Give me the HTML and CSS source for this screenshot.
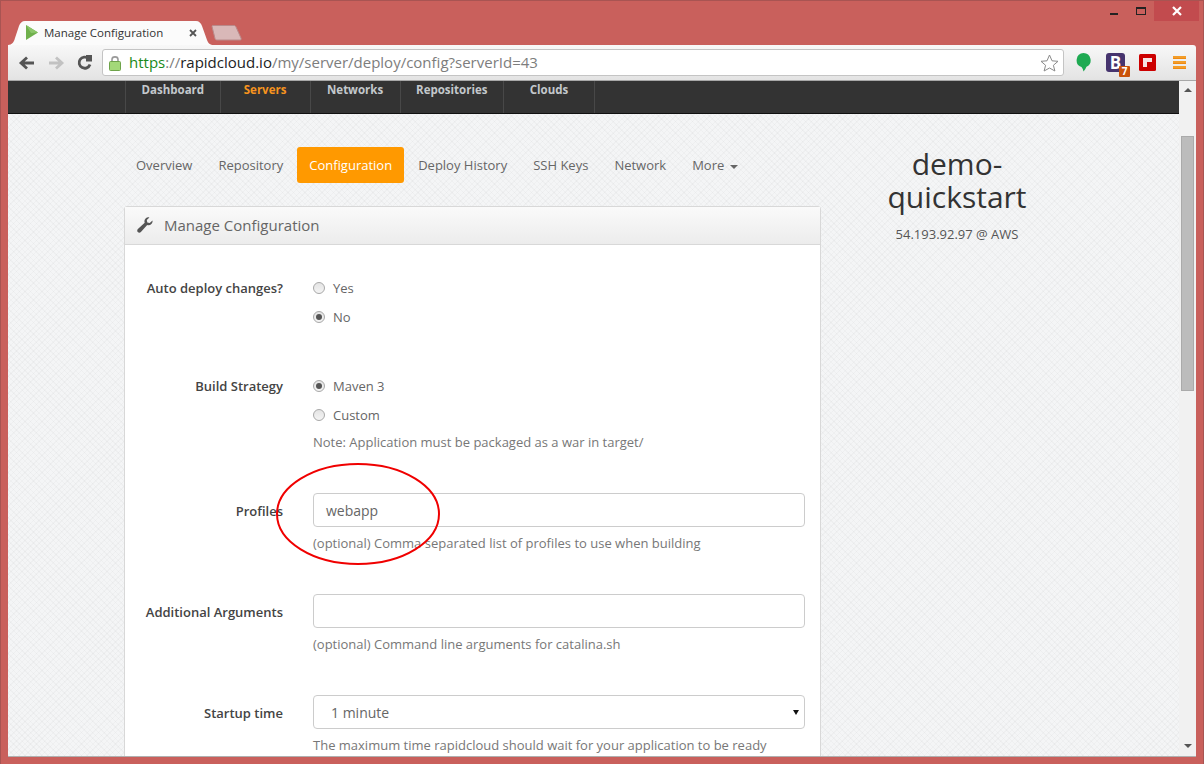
FILE: index.html
```html
<!DOCTYPE html>
<html lang="en">

<head>
    <meta charset="UTF-8">
    <meta name="viewport" content="width=device-width, initial-scale=1.0">
    <title>Manage Configuration</title>
    <link rel="stylesheet" href="styles.css">
</head>

<body>
    <div class="window">
        <div class="titlebar">
            <div class="tab">
                <svg class="tab-shape" width="206" height="24" viewBox="0 0 206 24">
                    <path d="M0 24C4 24 6 21 7 17L11 5C12 2 14 0 17 0H188C191 0 193 2 194 5L199 19C200 22 202 24 206 24Z" fill="#fbfbfb" />
                </svg>
                <svg class="favicon" width="14" height="16" viewBox="0 0 14 16">
                    <path d="M1 0L13 7.500L1 15Z" fill="#6fb04c" />
                    <path d="M1 0L13 7.500L6 8Z" fill="#8cc66a" />
                </svg>
                <span class="tab-title">Manage Configuration</span>
                <svg class="tab-close" width="8" height="8" viewBox="0 0 8 8">
                    <path d="M1 1L7 7M7 1L1 7" stroke="#555" stroke-width="1.800" />
                </svg>
            </div>
            <svg class="new-tab" width="32" height="16" viewBox="0 0 32 16">
                <path d="M1 1.500C1 .8 1.500 .5 2 .5H23C24 .5 24.500 1 25 2L30 13C30.500 14.500 30 15 29 15H6C5 15 4.400 14.500 4 13.500Z" fill="#d9b8b8" stroke="#b98a8a" />
            </svg>
            <div class="window-controls">
                <span class="minimize"></span>
                <span class="maximize"></span>
                <span class="close">
                    <svg width="12" height="10" viewBox="0 0 12 10">
                        <path d="M2 1L10 9M10 1L2 9" stroke="#fff" stroke-width="2.200" />
                    </svg>
                </span>
            </div>
        </div>

        <div class="toolbar">
            <svg class="tool" width="18" height="16" viewBox="0 0 18 16">
                <path d="M16 8H4M9 2.500L3 8L9 13.500" fill="none" stroke="#555" stroke-width="2.800" />
            </svg>
            <svg class="tool" width="18" height="16" viewBox="0 0 18 16">
                <path d="M2 8H14M9 2.500L15 8L9 13.500" fill="none" stroke="#c2c2c2" stroke-width="2.800" />
            </svg>
            <svg class="tool" width="18" height="18" viewBox="0 0 18 18">
                <path d="M14 10.500A5.600 5.600 0 1 1 12.500 4.500" fill="none" stroke="#555" stroke-width="2.800" />
                <path d="M10 1H16V7.500H10Z" fill="#555" />
            </svg>
            <div class="omnibox">
                <svg class="lock" width="12" height="16" viewBox="0 0 12 16">
                    <path d="M3 7V4.500C3 1 9 1 9 4.500V7" fill="none" stroke="#9a9a9a" stroke-width="1.600" />
                    <rect x=".5" y="6.500" width="11" height="9" rx="1" fill="#a3d879" stroke="#6ea34a" />
                </svg>
                <span class="url"><span class="url-scheme">https</span><span class="url-dim">://</span><span class="url-host">rapidcloud.io</span><span class="url-dim">/my/server/deploy/config?serverId=43</span></span>
                <svg class="star" width="19" height="18" viewBox="0 0 19 18">
                    <path d="M9.500 1L12 6.800L18 7.300L13.400 11.300L14.900 17L9.500 14L4.100 17L5.600 11.300L1 7.300L7 6.800Z" fill="#fff" stroke="#8a8a8a" />
                </svg>
            </div>
            <div class="extensions">
                <svg class="ext-hangouts" width="15" height="19" viewBox="0 0 15 19">
                    <path d="M7.500 0A7.200 7.200 0 0 1 10.500 13.700C9.800 15.500 8.800 17 7.500 18.500C7.200 17 6.800 15.500 5.500 14A7.200 7.200 0 0 1 7.500 0Z" fill="#1eaa52" />
                </svg>
                <span class="ext-bootstrap">B<span class="ext-badge">7</span></span>
                <svg class="ext-flipboard" width="17" height="17" viewBox="0 0 17 17">
                    <rect width="17" height="17" rx="1.500" fill="#cc0000" />
                    <path d="M4 4H13V8H8V13H4Z" fill="#f6e4e4" />
                </svg>
                <svg class="ext-menu" width="13" height="13" viewBox="0 0 13 13">
                    <path d="M0 0H13V3H0ZM0 5H13V8H0ZM0 10H13V13H0Z" fill="#ee8a12" />
                    <path d="M0 1H13M0 6H13M0 11H13" stroke="#f8b040" />
                </svg>
            </div>
        </div>

        <div class="viewport">
            <div class="page">
                <nav class="topnav">
                    <a>Dashboard</a>
                    <a class="active">Servers</a>
                    <a>Networks</a>
                    <a>Repositories</a>
                    <a>Clouds</a>
                </nav>

                <div class="columns">
                    <main class="main-col">
                        <ul class="pills">
                            <li>Overview</li>
                            <li>Repository</li>
                            <li class="active">Configuration</li>
                            <li>Deploy History</li>
                            <li>SSH Keys</li>
                            <li>Network</li>
                            <li>More <span class="caret"></span></li>
                        </ul>

                        <section class="panel">
                            <header class="panel-head">
                                <svg width="16" height="16" viewBox="0 0 16 16">
                                    <path d="M15.500 3.500C16 6 14 8.300 11.500 8.300C11 8.300 10.600 8.200 10.200 8.100L3.900 15C3 16 1.600 15.900 .8 15.100C0 14.300 0 13 .9 12.100L7.700 5.700C7.500 5.300 7.400 4.800 7.400 4.300C7.400 1.800 9.800 -.200 12.400 .4L9.800 3.100L10.300 5.500L12.700 6Z" fill="#555" />
                                </svg>
                                <span>Manage Configuration</span>
                            </header>

                            <div class="panel-body">
                                <div class="field field-radios auto-deploy">
                                    <label>Auto deploy changes?</label>
                                    <div>
                                        <div class="radio"><span class="dot"></span>Yes</div>
                                        <div class="radio"><span class="dot checked"></span>No</div>
                                    </div>
                                </div>

                                <div class="field field-radios">
                                    <label>Build Strategy</label>
                                    <div>
                                        <div class="radio"><span class="dot checked"></span>Maven 3</div>
                                        <div class="radio"><span class="dot"></span>Custom</div>
                                        <p class="help">Note: Application must be packaged as a war in target/</p>
                                    </div>
                                </div>

                                <div class="field">
                                    <label>Profiles</label>
                                    <div>
                                        <div class="input">webapp</div>
                                        <p class="help">(optional) Comma separated list of profiles to use when building</p>
                                    </div>
                                </div>

                                <div class="field">
                                    <label>Additional Arguments</label>
                                    <div>
                                        <div class="input"></div>
                                        <p class="help">(optional) Command line arguments for catalina.sh</p>
                                    </div>
                                </div>

                                <div class="field">
                                    <label>Startup time</label>
                                    <div>
                                        <div class="input select">1 minute<span class="select-arrow"></span></div>
                                        <p class="help">The maximum time rapidcloud should wait for your application to be ready</p>
                                    </div>
                                </div>
                            </div>
                        </section>
                    </main>

                    <aside class="server-info">
                        <h1>demo-quickstart</h1>
                        <p>54.193.92.97 @ AWS</p>
                    </aside>
                </div>

                <svg class="annotation" width="168" height="106" viewBox="0 0 168 106">
                    <ellipse cx="84" cy="53" rx="81" ry="50" fill="none" stroke="#f00000" stroke-width="2" />
                </svg>
            </div>

            <div class="scrollbar">
                <span class="arrow-up"></span>
                <span class="thumb"></span>
                <span class="arrow-down"></span>
            </div>
        </div>
    </div>
</body>

</html>
```

FILE: styles.css
```css
* {
    box-sizing: border-box;
}

html,
body {
    margin: 0;
    padding: 0;
    height: 100%;
    overflow: hidden;
}

body {
    font-family: "Open Sans", sans-serif;
    font-size: 13px;
    color: #666;
    background-color: #c9605c;
}

.window {
    width: 1204px;
    height: 764px;
    padding: 0 7px 7px 7px;
    border: 1px solid #a85452;
    border-width: 1px 1px 0 1px;
    display: flex;
    flex-direction: column;
}

/* title bar */
.titlebar {
    height: 44px;
    flex: none;
    display: flex;
    align-items: flex-end;
    position: relative;
}

.tab {
    width: 206px;
    height: 24px;
    padding: 0 0 1px 17px;
    display: flex;
    align-items: center;
    position: relative;
}

.tab-shape {
    position: absolute;
    left: 0;
    top: 0;
}

.favicon,
.tab-title,
.tab-close {
    position: relative;
}

.tab-title {
    margin-left: 5px;
    width: 133px;
    font-size: 11.5px;
    color: #333;
}

.tab-close {
    margin-left: 12px;
}

.new-tab {
    margin: 0 0 4px -3px;
}

.window-controls {
    position: absolute;
    right: -3px;
    top: 0;
    display: flex;
    align-items: flex-start;
}

.minimize {
    width: 8px;
    height: 2px;
    margin: 12px 18px 0 0;
    background-color: #222;
}

.maximize {
    width: 10px;
    height: 8px;
    margin: 6px 8px 0 0;
    border: 1px solid #222;
    border-top-width: 2px;
}

.close {
    width: 45px;
    height: 20px;
    background-color: #c24b4e;
    display: flex;
    align-items: center;
    justify-content: center;
}

/* browser toolbar */
.toolbar {
    height: 36px;
    flex: none;
    padding-left: 10px;
    display: flex;
    align-items: center;
    gap: 11px;
    background: linear-gradient(#f8f8f8, #e3e3e3);
    border-bottom: 1px solid #a8a8a8;
    border-top-right-radius: 3px;
}

.omnibox {
    width: 962px;
    height: 27px;
    margin-left: -3px;
    padding: 0 4px 0 6px;
    display: flex;
    align-items: center;
    background-color: #fff;
    border: 1px solid #c4c4c4;
    border-radius: 3px;
}

.url {
    margin: 0 0 2px 8px;
    flex: 1;
    font-size: 15px;
    color: #7d7d7d;
}

.url-scheme {
    color: #1a8a1a;
}

.url-host {
    color: #222;
}

.extensions {
    flex: 1;
    padding-left: 1px;
    display: flex;
    align-items: center;
}

.ext-bootstrap {
    width: 19px;
    height: 19px;
    margin-left: 15px;
    font-weight: 700;
    font-size: 17px;
    line-height: 19px;
    text-align: center;
    color: #fff;
    background-color: #46346e;
    border-radius: 3px;
    position: relative;
}

.ext-flipboard {
    margin-left: 14px;
}

.ext-menu {
    margin-left: 17px;
}

.ext-badge {
    position: absolute;
    right: -5px;
    bottom: -5px;
    width: 11px;
    height: 11px;
    font-size: 10px;
    line-height: 11px;
    background-color: #c9520a;
    border-radius: 1px;
}

/* page */
.viewport {
    flex: 1;
    min-height: 0;
    display: flex;
    border-bottom: 1px solid #b0b0b0;
}

.page {
    flex: 1;
    min-width: 0;
    overflow: hidden;
    position: relative;
    background-color: #f4f5f6;
    background-image:
        repeating-linear-gradient(45deg, rgba(0, 0, 0, .022) 0 1px, transparent 1px 4px),
        repeating-linear-gradient(-45deg, rgba(0, 0, 0, .022) 0 1px, transparent 1px 4px);
}

.topnav {
    height: 33px;
    padding-left: 117px;
    display: flex;
    background-color: #333;
    border-bottom: 1px solid #111;
}

.topnav a {
    min-width: 90px;
    padding: 1px 15.5px 0;
    font-size: 11.5px;
    font-weight: 700;
    line-height: 16px;
    text-align: center;
    color: #c3c8cc;
    border-left: 1px solid #484848;
}

.topnav a:last-child {
    min-width: 92px;
    border-right: 1px solid #484848;
}

.topnav a.active {
    color: #f7931e;
}

.columns {
    padding: 33px 0 0 116px;
    display: flex;
    align-items: flex-start;
}

.main-col {
    width: 697px;
    flex: none;
}

.pills {
    margin: 0 0 23px;
    padding: 0;
    height: 36px;
    list-style: none;
    display: flex;
    gap: 2px;
}

.pills li {
    padding: 0 12px;
    line-height: 36px;
    border-radius: 3px;
}

.pills li.active {
    color: #fff;
    background-color: #ff9900;
}

.caret {
    display: inline-block;
    margin-left: 2px;
    vertical-align: middle;
    border-top: 4px solid #666;
    border-left: 4px solid transparent;
    border-right: 4px solid transparent;
}

.panel {
    background-color: #fff;
    border: 1px solid #d8d8d8;
    border-radius: 3px 3px 0 0;
}

.panel-head {
    height: 38px;
    padding: 0 0 2px 12px;
    display: flex;
    align-items: center;
    gap: 11px;
    font-size: 15px;
    color: #666;
    background: linear-gradient(#fafafa, #ececec);
    border-bottom: 1px solid #d8d8d8;
}

.panel-body {
    padding: 28px 15px 0 0;
}

.field {
    display: grid;
    grid-template-columns: 158px 492px;
    column-gap: 30px;
    margin-bottom: 41px;
}

.field > label {
    padding-top: 8px;
    line-height: 20px;
    text-align: right;
    font-weight: 600;
    color: #444;
}

.field-radios > label {
    padding-top: 5px;
}

.auto-deploy {
    margin-bottom: 40px;
}

.radio {
    height: 29px;
    display: flex;
    align-items: center;
    color: #666;
}

.dot {
    width: 12px;
    height: 12px;
    margin-right: 8px;
    border: 1px solid #a8a8a8;
    border-radius: 50%;
    background: linear-gradient(#e4e4e4, #f4f4f4);
    position: relative;
}

.dot.checked::after {
    content: "";
    position: absolute;
    left: 2px;
    top: 2px;
    width: 6px;
    height: 6px;
    border-radius: 50%;
    background-color: #555;
}

.help {
    margin: 6px 0 0;
    line-height: 20px;
    color: #777;
}

.radio + .help {
    margin-top: 3px;
}

.input {
    height: 34px;
    padding: 0 12px;
    display: flex;
    align-items: center;
    font-size: 14px;
    color: #666;
    background-color: #fff;
    border: 1px solid #ccc;
    border-radius: 4px;
}

.select {
    padding-left: 17px;
    justify-content: space-between;
    padding-right: 5px;
}

.select-arrow {
    border-top: 5px solid #111;
    border-left: 3px solid transparent;
    border-right: 3px solid transparent;
}

.server-info {
    width: 172px;
    margin-left: 50px;
    flex: none;
    text-align: center;
}

.server-info h1 {
    margin: 0;
    font-size: 30px;
    font-weight: 400;
    line-height: 33px;
    color: #333;
}

.server-info p {
    margin: 11px 0 0;
    font-size: 13px;
    line-height: 20px;
    color: #555;
}

.annotation {
    position: absolute;
    left: 266px;
    top: 380px;
}

/* scrollbar */
.scrollbar {
    width: 17px;
    flex: none;
    padding: 0 2px;
    display: flex;
    flex-direction: column;
    align-items: center;
    background-color: #f1f1f1;
}

.arrow-up {
    margin-top: 7px;
    border-bottom: 4px solid #555;
    border-left: 4px solid transparent;
    border-right: 4px solid transparent;
}

.thumb {
    width: 13px;
    height: 255px;
    margin-top: 44px;
    background-color: #bcbcbc;
    border: 1px solid #aaa;
}

.arrow-down {
    margin-top: auto;
    margin-bottom: 8px;
    border-top: 4px solid #555;
    border-left: 4px solid transparent;
    border-right: 4px solid transparent;
}
```
